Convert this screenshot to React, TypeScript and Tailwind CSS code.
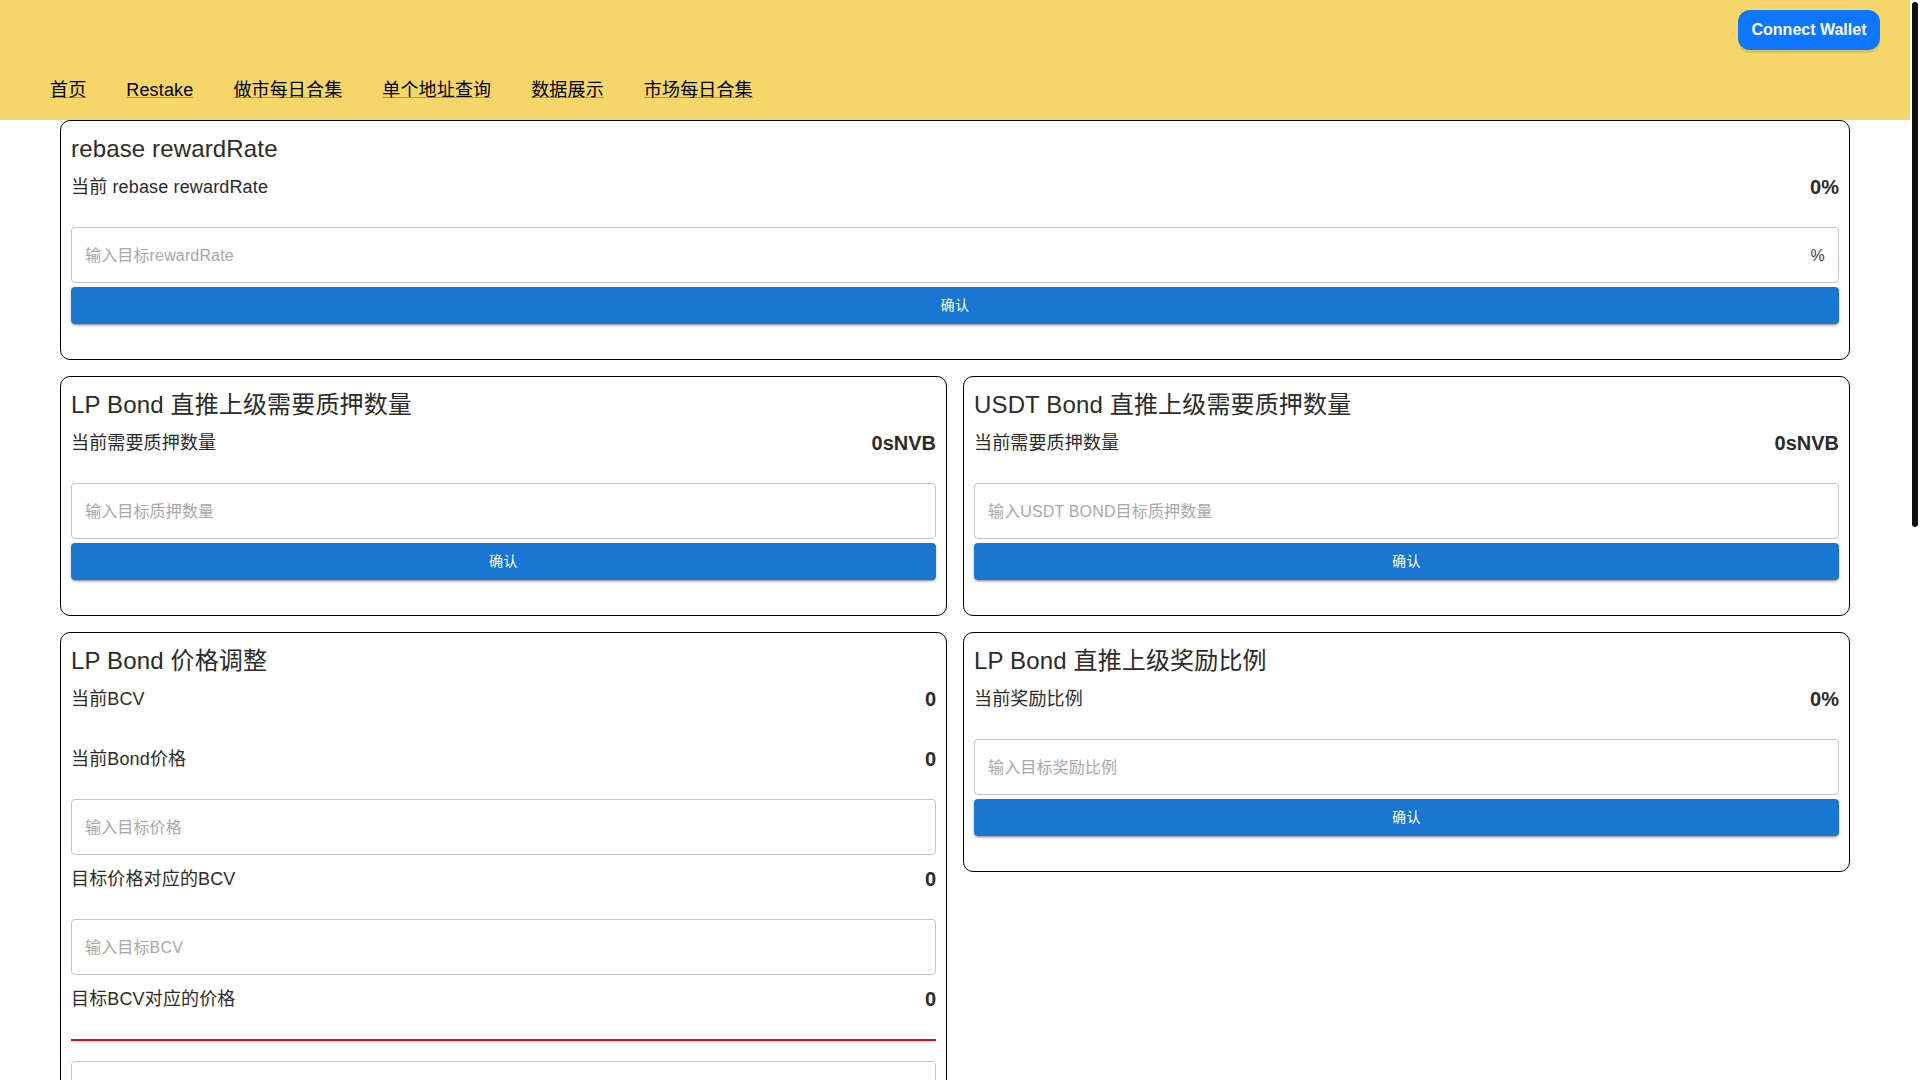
const NAV = ['首页', 'Restake', '做市每日合集', '单个地址查询', '数据展示', '市场每日合集']

function Card({ title, children }: { title: string; children: React.ReactNode }) {
  return (
    <div className="rounded-[10px] border border-black bg-white px-[10px] pt-[10px] pb-[35px]">
      <h2 className="h-[36px] text-[24px] leading-[36px] font-normal text-[#2b2b2b]">{title}</h2>
      {children}
    </div>
  )
}

function Row({ label, value }: { label: string; value: string }) {
  return (
    <div className="mb-5 flex h-10 items-center justify-between text-[#2b2b2b]">
      <span className="text-[18px]">{label}</span>
      <span className="text-[20px] font-bold tracking-normal">{value}</span>
    </div>
  )
}

function Field({ placeholder, suffix }: { placeholder?: string; suffix?: string }) {
  return (
    <div className="flex h-14 items-center rounded border border-[#c4c4c4] bg-white px-[14px]">
      <input
        placeholder={placeholder}
        className="-ml-px min-w-0 flex-1 bg-transparent pt-px text-[16px] tracking-[0.00938em] outline-none placeholder:text-[#a8a8a8]"
      />
      {suffix && <span className="-mr-px pt-px text-[16px] text-[#444]">{suffix}</span>}
    </div>
  )
}

function Confirm() {
  return (
    <button className="mt-1 block h-[37px] w-full rounded bg-[#1976d2] text-[14px] tracking-[0.02857em] text-white shadow-[0_3px_1px_-2px_rgba(0,0,0,0.2),0_2px_2px_0_rgba(0,0,0,0.14),0_1px_5px_0_rgba(0,0,0,0.12)]">
      确认
    </button>
  )
}

export default function App() {
  return (
    <div className="flex h-screen overflow-hidden bg-white tracking-[0.00938em] [font-family:'Liberation_Sans','Noto_Sans_CJK_SC',sans-serif]">
      <div className="min-w-0 flex-1">
        <header className="flex h-[120px] flex-col justify-between bg-[#f4d669] pr-[30px] pl-[50px]">
          <div className="flex justify-end pt-[10px]">
            <button className="h-10 w-[142px] rounded-xl bg-[#0e76fd] text-[16px] font-bold tracking-normal text-white shadow-[0_3px_0_rgba(0,0,0,0.1)]">
              Connect Wallet
            </button>
          </div>
          <nav className="flex gap-10 pb-[22px] text-[18px] leading-[13px] text-black">
            {NAV.map(n => (
              <a key={n} className="border-b border-[#9c9c7c]">{n}</a>
            ))}
          </nav>
        </header>

        <main className="px-[60px]">
          <Card title="rebase rewardRate">
            <Row label="当前 rebase rewardRate" value="0%" />
            <Field placeholder="输入目标rewardRate" suffix="%" />
            <Confirm />
          </Card>

          <div className="mt-4 grid grid-cols-2 items-start gap-4">
            <Card title="LP Bond 直推上级需要质押数量">
              <Row label="当前需要质押数量" value="0sNVB" />
              <Field placeholder="输入目标质押数量" />
              <Confirm />
            </Card>
            <Card title="USDT Bond 直推上级需要质押数量">
              <Row label="当前需要质押数量" value="0sNVB" />
              <Field placeholder="输入USDT BOND目标质押数量" />
              <Confirm />
            </Card>
            <Card title="LP Bond 价格调整">
              <Row label="当前BCV" value="0" />
              <Row label="当前Bond价格" value="0" />
              <Field placeholder="输入目标价格" />
              <div className="mt-1">
                <Row label="目标价格对应的BCV" value="0" />
              </div>
              <Field placeholder="输入目标BCV" />
              <div className="mt-1">
                <Row label="目标BCV对应的价格" value="0" />
              </div>
              <div className="mb-5 h-[2px] bg-[#f00]" />
              <Field />
              <Confirm />
            </Card>
            <Card title="LP Bond 直推上级奖励比例">
              <Row label="当前奖励比例" value="0%" />
              <Field placeholder="输入目标奖励比例" />
              <Confirm />
            </Card>
          </div>
        </main>
      </div>

      {/* scrollbar as it shows in the picture */}
      <aside className="w-[10px] shrink-0 bg-white px-[2px] pt-[2px]">
        <div className="h-[525px] rounded-[3px] bg-[#111]" />
      </aside>
    </div>
  )
}
